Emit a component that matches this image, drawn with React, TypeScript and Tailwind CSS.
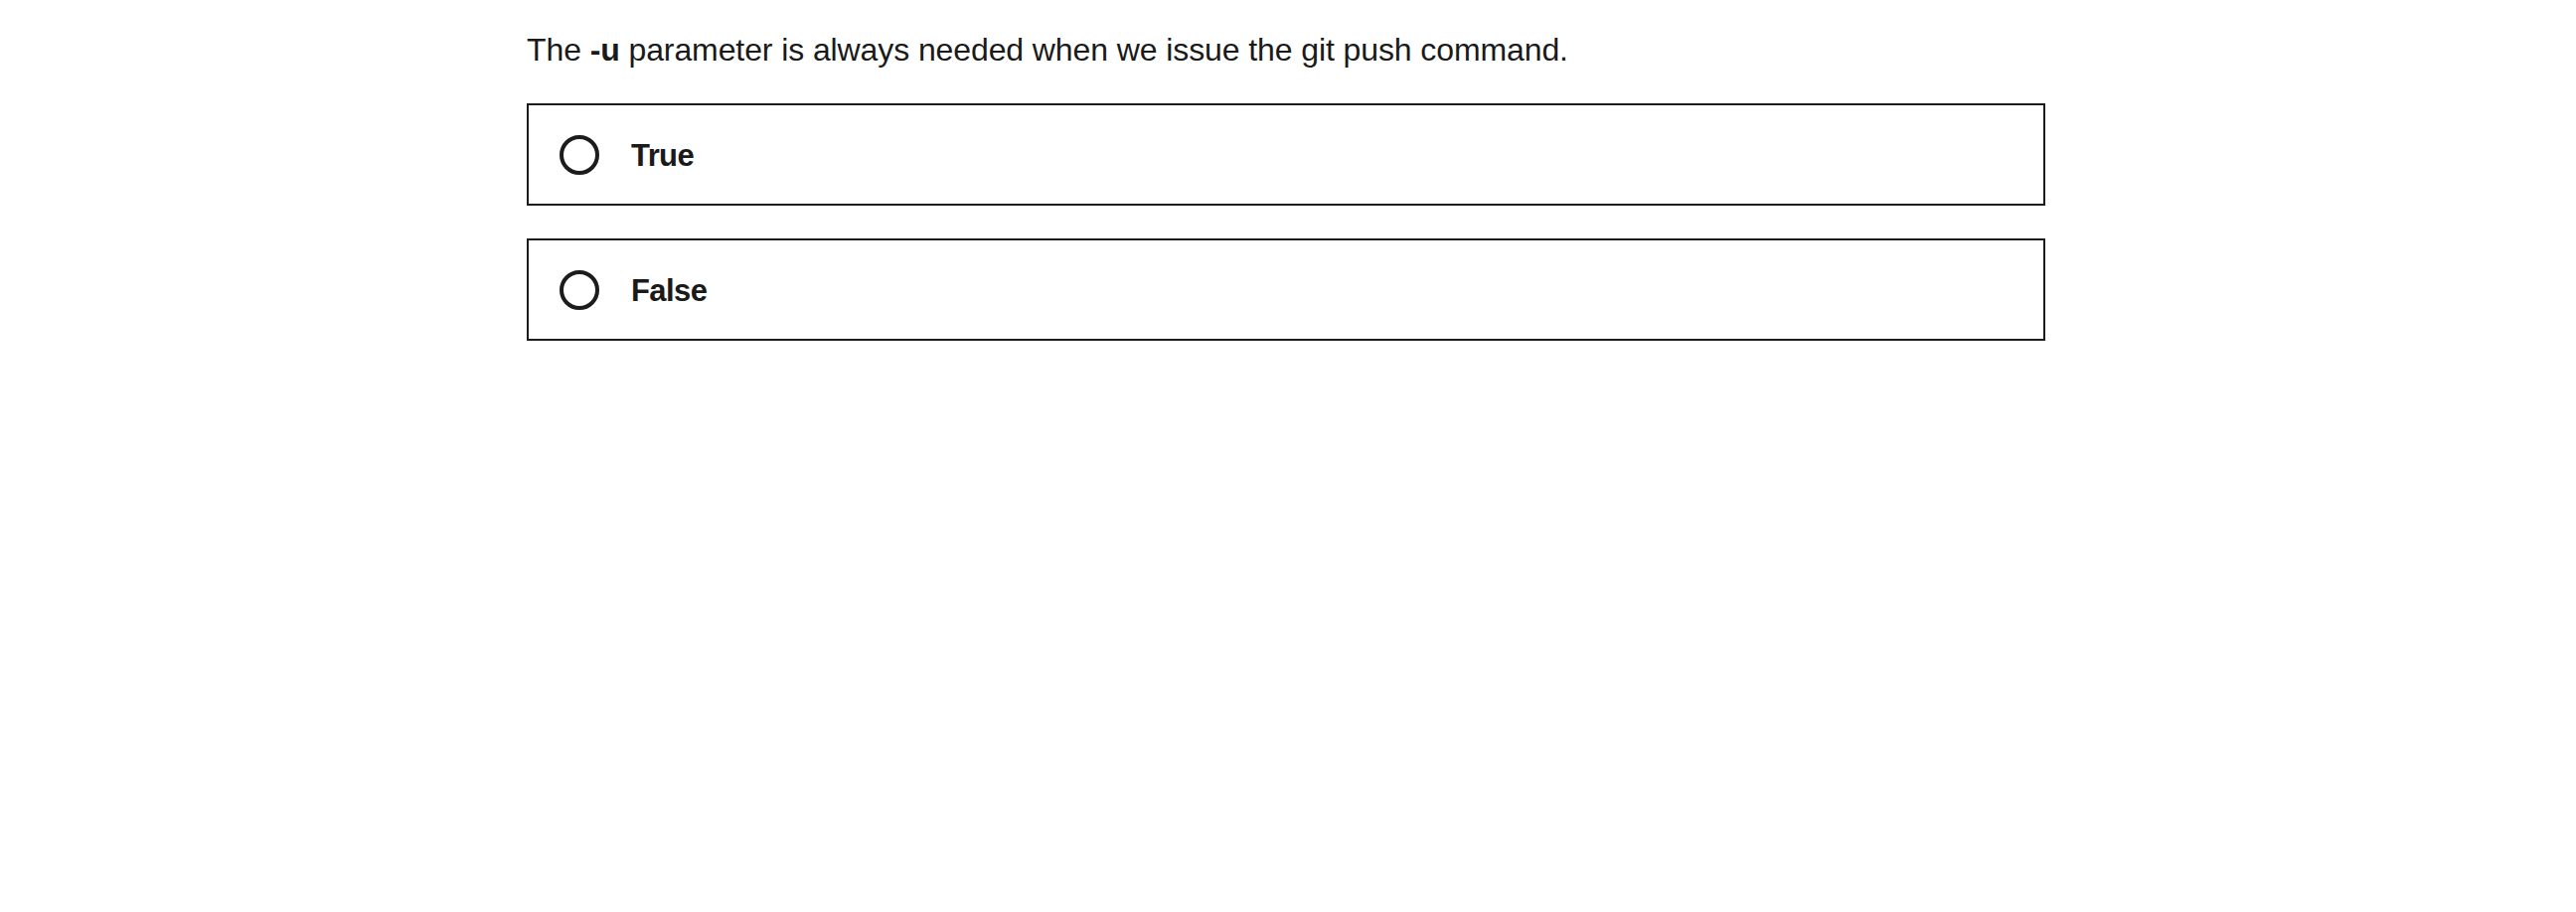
const options = ["True", "False"];

export default function App() {
  return (
    <div className="min-h-[918px] bg-white text-[#1a1a1a] font-['Liberation_Sans',Arial,sans-serif]">
      <div className="flex justify-center pr-[4px]">
        <div className="w-[1528px] pt-[31px]">
          <p className="text-[32px] leading-[38px] tracking-[-0.1px]">
            The <strong className="font-bold">-u</strong> parameter is always needed when we issue the git push command.
          </p>
          <div className="mt-[35px] flex flex-col gap-[33px]">
            {options.map((opt) => (
              <label
                key={opt}
                className="flex h-[103px] items-center gap-[32px] border-2 border-[#1c1c1c] pl-[31px]"
              >
                <span className="h-[40px] w-[40px] rounded-full border-4 border-[#1c1c1c]" />
                <span className="pt-[3px] text-[31px] font-bold tracking-[-0.6px]">{opt}</span>
              </label>
            ))}
          </div>
        </div>
      </div>
    </div>
  );
}
